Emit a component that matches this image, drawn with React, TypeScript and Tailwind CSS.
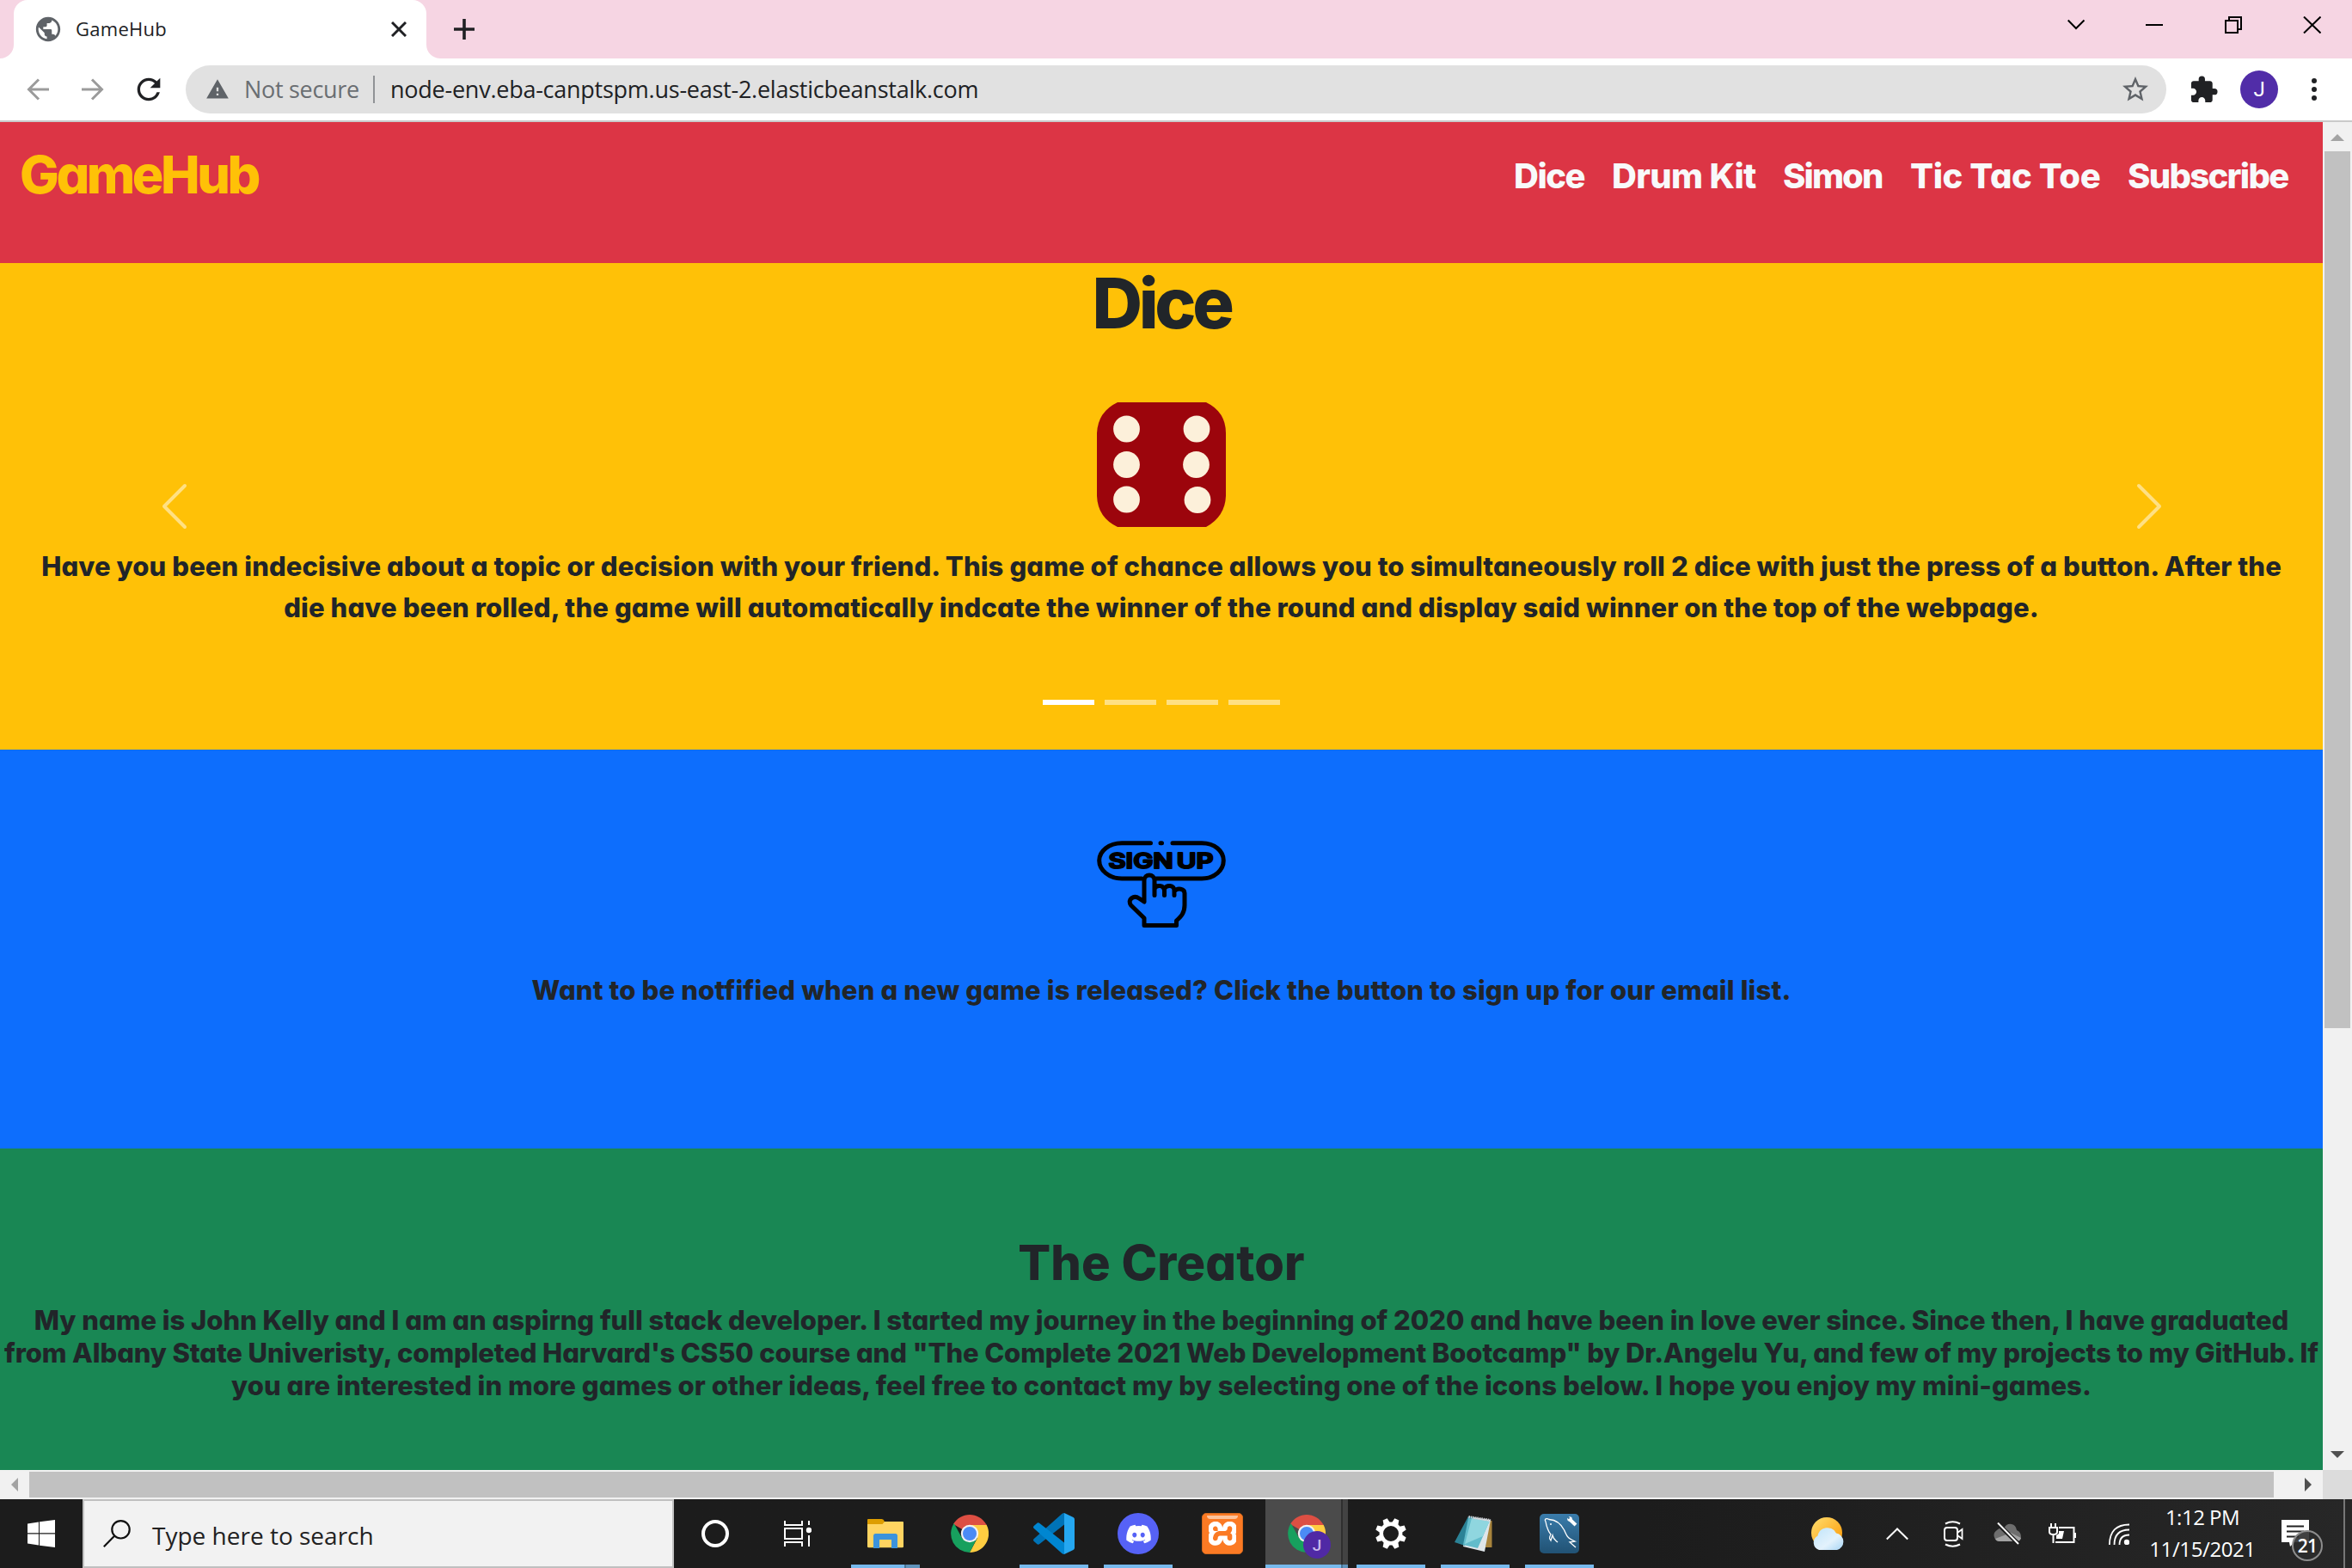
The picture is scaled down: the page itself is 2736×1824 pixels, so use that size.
import React from "react";
import { MdPublic, MdRefresh, MdWarning, MdStarBorder, MdExtension } from "react-icons/md";
import { SiXampp } from "react-icons/si";
import { FaDiscord } from "react-icons/fa";

function TabStrip() {
  return (
    <div className="flex h-[68px] shrink-0 bg-[#f6d5e3] text-[#202124]">
      <div className="relative ml-4 flex h-[68px] w-[480px] items-center rounded-t-[16px] bg-white pl-[23px]">
        <svg className="absolute bottom-0 -left-4 size-4" viewBox="0 0 16 16">
          <path d="M16 0V16H0A16 16 0 0 0 16 0Z" fill="#fff" />
        </svg>
        <svg className="absolute -right-4 bottom-0 size-4" viewBox="0 0 16 16">
          <path d="M0 0V16H16A16 16 0 0 1 0 0Z" fill="#fff" />
        </svg>
        <MdPublic className="size-[34px] text-[#5f6368]" />
        <span className="-mt-[2px] ml-[15px] text-[22px] leading-none tracking-[0.27px] whitespace-nowrap">GameHub</span>
        <svg className="mr-[23px] ml-auto size-[18px]" viewBox="0 0 18 18" stroke="#202124" strokeWidth="3">
          <path d="M1 1L17 17M17 1L1 17" />
        </svg>
      </div>
      <svg className="mt-[22px] ml-8 size-6" viewBox="0 0 24 24" stroke="#202124" strokeWidth="3.6">
        <path d="M12 0V24M0 12H24" />
      </svg>
      <svg className="mt-[19px] mr-9 ml-auto h-5 w-[295px]" viewBox="0 0 295 20" fill="none" stroke="#000" strokeWidth="2">
        <path d="M.7 4.5L10 14L19.5 4.5" />
        <path d="M91 10H111" />
        <path d="M184 5H198V19H184ZM188 5V1H202V15H198" />
        <path d="M275 .5L294.500 19.500M294.500 .5L275 19.500" />
      </svg>
    </div>
  );
}

function Toolbar() {
  return (
    <div className="flex h-[74px] shrink-0 items-center border-b-2 border-[#cacaca] bg-white pb-0 text-[#202124]">
      <svg className="ml-[31px] size-[26px]" viewBox="0 0 26 26" fill="none" stroke="#9b9b9b" strokeWidth="3">
        <path d="M26 13H2.500M14 1.500L2.500 13L14 24.500" />
      </svg>
      <svg className="ml-[38px] size-[26px]" viewBox="0 0 26 26" fill="none" stroke="#9b9b9b" strokeWidth="3">
        <path d="M0 13H23.500M12 1.500L23.500 13L12 24.500" />
      </svg>
      <MdRefresh className="ml-[32px] size-10" />
      <div className="ml-[23px] flex h-14 w-[2304px] items-center rounded-full bg-[#e1e1e1] pr-[18px] pl-[23px]">
        <MdWarning className="size-[28px] text-[#5f6368]" />
        <span className="-mt-[2px] ml-[17px] w-[134px] text-[27px] leading-none tracking-[-0.3px] whitespace-nowrap text-[#6a6e72]">Not secure</span>
        <span className="ml-[16px] h-8 w-[2px] bg-[#909396]" />
        <span className="-mt-[2px] ml-[18px] text-[27px] leading-none tracking-[-0.25px] whitespace-nowrap">
          node-env.eba-canptspm.us-east-2.elasticbeanstalk.com
        </span>
        <MdStarBorder className="ml-auto size-[36px] text-[#5f6368]" />
      </div>
      <MdExtension className="ml-[26px] size-[35px]" />
      <div className="ml-[25px] flex size-11 items-center justify-center rounded-full bg-[#512da8] font-['Roboto'] text-[24px] leading-none text-white">J</div>
      <svg className="ml-[39px] h-[26px] w-[6px]" viewBox="0 0 6 26" fill="#202124">
        <circle cx="3" cy="3" r="3" />
        <circle cx="3" cy="13" r="3" />
        <circle cx="3" cy="23" r="3" />
      </svg>
    </div>
  );
}

function SiteHeader() {
  return (
    <header className="flex h-[164px] items-start bg-[#dc3545] pl-[23px] text-[#f8f9fa]">
      <a className="h-[123px] text-[61px] leading-[123px] tracking-[-3.500px] whitespace-nowrap text-[#ffc107]">GameHub</a>
      <nav className="mr-[38px] ml-auto flex h-[125px] text-[40px] leading-[125px] whitespace-nowrap">
        <a className="w-[114px] pl-px tracking-[-1.500px]">Dice</a>
        <a className="w-[199px] pl-px tracking-[-0.700px]">Drum Kit</a>
        <a className="w-[149px] pl-px tracking-[-1.900px]">Simon</a>
        <a className="w-[252px] tracking-[-0.4px]">Tic Tac Toe</a>
        <a className="w-[190px] pl-px tracking-[-1.700px]">Subscribe</a>
      </nav>
    </header>
  );
}

function Die() {
  const pips = [
    [34.5, 31], [116, 31], [34.5, 72.5], [115.500, 72.5], [34.500, 113], [117, 113.500],
  ];
  return (
    <svg className="mt-[67px] h-[145px] w-[150px]" viewBox="0 0 150 145">
      <path d="M24 0H127Q150 11 150 36V109Q149 133 127 145H24Q1 134 0 109V36Q1 11 24 0Z" fill="#9c050c" />
      {pips.map(([x, y]) => (
        <circle key={x + "-" + y} cx={x} cy={y} r="15.400" fill="#fcf0da" />
      ))}
    </svg>
  );
}

function Carousel() {
  return (
    <section className="relative flex h-[566px] flex-col items-center bg-[#ffc107]">
      <h1 className="h-[95px] text-[81px] leading-[95px] tracking-[-4.300px] whitespace-nowrap">Dice</h1>
      <Die />
      <p className="mt-[22px] text-center text-[31px] leading-[48px] whitespace-nowrap">
        <span className="block tracking-[0.104px]">
          Have you been indecisive about a topic or decision with your friend. This game of chance allows you to simultaneously roll 2 dice with just the press of a button. After the
        </span>
        <span className="block tracking-[0.122px]">
          die have been rolled, the game will automatically indcate the winner of the round and display said winner on the top of the webpage.
        </span>
      </p>
      <div className="mt-[83px] flex gap-3">
        <span className="h-[6px] w-[60px] bg-white" />
        <span className="h-[6px] w-[60px] bg-white/50" />
        <span className="h-[6px] w-[60px] bg-white/50" />
        <span className="h-[6px] w-[60px] bg-white/50" />
      </div>
      <svg className="absolute top-[256px] left-[188px] h-[54px] w-[30px]" viewBox="0 0 30 54" fill="none" stroke="#ffe083" strokeWidth="4" strokeLinecap="round" strokeLinejoin="round">
        <path d="M27 3L3 27L27 51" />
      </svg>
      <svg className="absolute top-[256px] right-[187px] h-[54px] w-[30px]" viewBox="0 0 30 54" fill="none" stroke="#ffe083" strokeWidth="4" strokeLinecap="round" strokeLinejoin="round">
        <path d="M3 3L27 27L3 51" />
      </svg>
    </section>
  );
}

function SignUp() {
  return (
    <section className="flex h-[464px] flex-col items-center bg-[#0d6efd]">
      <svg className="mt-[106px] h-[102px] w-[150px]" viewBox="0 0 150 102" fill="none" stroke="#000" strokeWidth="5" strokeLinecap="round" strokeLinejoin="round">
        <path d="M62.500 2.700H29C14 2.700 2.700 12 2.700 23S14 44 29 44H52M69 44H122C137 44 147.300 34 147.300 23S137 2.700 122 2.700H88" />
        <path d="M74 2.700H75.500" />
        <path d="M55 71V46C55 38 67 38 67 46V63.500M67 56C69 51 78 51 78.500 58V63.500M78.500 56C81 51 90 51 90 58V63.500M90 59C94 54 102 56 102 61V75C102 84 98 88 92.500 93V98.500H55V90L39.500 75C35 68 43 63 49 67L55 71" />
        <text x="13.500" y="31.800" fontSize="24" fontWeight="600" fill="#000" strokeWidth="2" wordSpacing="-3" textLength="122" lengthAdjust="spacingAndGlyphs">SIGN UP</text>
      </svg>
      <p className="mt-[48px] text-[31px] leading-[48px] tracking-[0.150px] whitespace-nowrap">
        Want to be notfified when a new game is released? Click the button to sign up for our email list.
      </p>
    </section>
  );
}

function Creator() {
  return (
    <section className="flex flex-1 flex-col items-center bg-[#198754] pt-[100px]">
      <h2 className="h-[67px] text-[56px] leading-[67px] tracking-[0.2px] whitespace-nowrap">The Creator</h2>
      <p className="mt-[14px] text-center text-[31px] leading-[38.200px] whitespace-nowrap">
        <span className="block tracking-[-0.020px]">
          My name is John Kelly and I am an aspirng full stack developer. I started my journey in the beginning of 2020 and have been in love ever since. Since then, I have graduated
        </span>
        <span className="block tracking-[-0.115px]">
          from Albany State Univeristy, completed Harvard's CS50 course and "The Complete 2021 Web Development Bootcamp" by Dr.Angelu Yu, and few of my projects to my GitHub. If
        </span>
        <span className="block tracking-[0.055px]">
          you are interested in more games or other ideas, feel free to contact my by selecting one of the icons below. I hope you enjoy my mini-games.
        </span>
      </p>
    </section>
  );
}

function VerticalScrollbar() {
  return (
    <div className="flex w-[34px] flex-col items-center bg-[#f1f1f1]">
      <svg className="mt-[14px] h-2 w-4" viewBox="0 0 16 8"><path d="M8 0L16 8H0Z" fill="#a3a3a3" /></svg>
      <div className="mt-3 h-[1020px] w-[30px] bg-[#c1c1c1]" />
      <svg className="mt-auto mb-[14px] h-2 w-4" viewBox="0 0 16 8"><path d="M0 0H16L8 8Z" fill="#505050" /></svg>
    </div>
  );
}

function HorizontalScrollbar() {
  return (
    <div className="flex h-[34px] shrink-0 items-center bg-[#f1f1f1]">
      <svg className="ml-[13px] h-4 w-2" viewBox="0 0 8 16"><path d="M8 0V16L0 8Z" fill="#a3a3a3" /></svg>
      <div className="ml-[13px] h-[30px] w-[2611px] bg-[#c1c1c1]" />
      <svg className="ml-9 h-4 w-2" viewBox="0 0 8 16"><path d="M0 0V16L8 8Z" fill="#505050" /></svg>
      <div className="ml-auto h-[34px] w-[34px] bg-[#dcdcdc]" />
    </div>
  );
}

function ChromeIcon({ className }: { className: string }) {
  return (
    <svg className={className} viewBox="0 0 44 44">
      <path d="M22 22L2.950 11A22 22 0 0 1 41.050 11L42 12H22Z" fill="#dd4f43" />
      <path d="M22 12H41.700A22 22 0 0 1 22 44L31 27Z" fill="#ffcd41" />
      <path d="M3.700 10A22 22 0 0 0 22 44L30.700 27L22 32L13 27Z" fill="#17a05e" />
      <circle cx="22" cy="22" r="10.200" fill="#f1f1f1" />
      <circle cx="22" cy="22" r="8" fill="#4b8bf5" />
    </svg>
  );
}

function TaskbarApp({ children, state = "none" }: { children: React.ReactNode; state?: "none" | "open" | "stacked" | "active" }) {
  if (state === "active") {
    return (
      <div className="relative flex h-20 w-[98px] items-center justify-center px-px">
        <div className="absolute inset-y-0 left-px flex w-24">
          <span className="w-[88px] border-b-4 border-[#76b9ed] bg-[#4b4b4b]" />
          <span className="w-[2px] border-b-4 border-[#4a7494] bg-[#2f2f2f]" />
          <span className="w-[6px] border-b-4 border-[#6093bb] bg-[#434343]" />
        </div>
        <div className="relative">{children}</div>
      </div>
    );
  }
  return (
    <div className="relative flex h-20 w-[98px] items-center justify-center">
      {children}
      {state !== "none" && (
        <div className="absolute bottom-0 left-[9px] flex h-1 w-20 bg-[#76b9ed]">
          {state === "stacked" && <span className="ml-auto h-1 w-[18px] border-l-2 border-[#4a7494] bg-[#6093bb]" />}
        </div>
      )}
    </div>
  );
}

function Gear() {
  return (
    <svg className="size-9" viewBox="-18 -18 36 36" fill="none" stroke="#fff">
      <circle r="11.200" strokeWidth="4.400" />
      {[22.5, 67.5, 112.5, 157.5, 202.5, 247.5, 292.5, 337.5].map((a) => (
        <path key={a} d="M-4 -11.500L-2.700 -18H2.700L4 -11.500Z" fill="#fff" stroke="none" transform={`rotate(${a})`} />
      ))}
    </svg>
  );
}

function Taskbar() {
  return (
    <footer className="flex h-20 shrink-0 items-center bg-linear-to-r from-[#1c1c1c] from-70% to-[#272727] text-white">
      <div className="flex w-24 items-center justify-center">
        <svg className="size-8" viewBox="0 0 32 32" fill="#fff">
          <path d="M0 4.500L13 2.500V15.300H0ZM14 2.300L32 0V15.300H14ZM0 16.500H13V29.500L0 27.500ZM14 16.500H32V32L14 29.700Z" />
        </svg>
      </div>
      <div className="flex h-20 w-[688px] items-center border-2 border-[#c0c0c0] bg-[#f2f2f2] pl-[22px] text-[#222]">
        <svg className="size-8" viewBox="0 0 32 32" fill="none" stroke="#111" strokeWidth="2.200">
          <circle cx="20.500" cy="11.300" r="10.200" />
          <path d="M13.300 18.600L.8 31.200" />
        </svg>
        <span className="mt-[3px] ml-[25px] text-[28px] leading-none whitespace-nowrap">Type here to search</span>
      </div>
      <div className="flex w-24 justify-center">
        <span className="size-8 rounded-full border-[4.500px] border-white" />
      </div>
      <div className="flex w-[101px] justify-center">
        <svg className="mr-[5px] h-[30px] w-8" viewBox="0 0 32 30" fill="none" stroke="#fff" strokeWidth="2">
          <path d="M1 0V5H21V0M1 9H21V21H1ZM1 30V25H21V30M29 0V5M29 17V30" />
          <circle cx="29" cy="11" r="3.200" fill="#fff" stroke="none" />
        </svg>
      </div>
      <TaskbarApp state="stacked">
        <svg className="h-[34px] w-[42px]" viewBox="0 0 42 34">
          <path d="M0 1Q0 0 1 0H16.500Q18.500 0 19.500 2L20.500 6H0Z" fill="#dd9d00" />
          <path d="M0 6H17.500L20 3H41Q42 3 42 4V32Q42 33.300 40.500 33.300H1.500Q0 33.300 0 32Z" fill="#ffd461" />
          <path d="M7 34V19.500Q7 17 9.500 17H32.500Q35 17 35 19.500V34H28V24H14V34Z" fill="#3c93dc" />
        </svg>
      </TaskbarApp>
      <TaskbarApp><ChromeIcon className="size-11" /></TaskbarApp>
      <TaskbarApp state="open">
        <svg className="size-12" viewBox="0 0 48 48">
          <path d="M36 0V13.500L7 36.300Q5.500 37.300 4.200 36L.8 33Q-.8 31.500 .8 30L33 1.200Q34.500 0 36 0Z" fill="#0073b7" />
          <path d="M36 48V34.500L7 11.700Q5.500 10.700 4.200 12L.8 15Q-.8 16.500 .8 18L33 46.800Q34.500 48 36 48Z" fill="#0086d1" />
          <path d="M36 0L46.500 5Q48 5.800 48 7.500V40.500Q48 42.200 46.500 43L36 48Z" fill="#25a7f0" />
        </svg>
      </TaskbarApp>
      <TaskbarApp state="open">
        <div className="flex size-12 items-center justify-center rounded-full bg-[#5662f6]">
          <FaDiscord className="size-[31px]" />
        </div>
      </TaskbarApp>
      <TaskbarApp>
        <div className="relative flex size-12 items-center justify-center overflow-hidden rounded-[5px] border border-[#d2691e] bg-[#fb7a24]">
          <span className="absolute top-[9px] left-[7px] h-7 w-8 bg-white" />
          <SiXampp className="relative size-[46px] shrink-0 text-[#fb7a24]" />
          <span className="absolute top-[2px] left-[5px] h-[4px] w-9 rounded-b-full bg-white/55" />
        </div>
      </TaskbarApp>
      <TaskbarApp state="active">
        <ChromeIcon className="size-11" />
        <span className="absolute top-[19px] left-[18px] flex size-8 items-center justify-center rounded-full bg-[#5029a5] font-['Roboto'] text-[19px] leading-none font-medium text-[#c9b8ea]">J</span>
      </TaskbarApp>
      <TaskbarApp state="open"><Gear /></TaskbarApp>
      <TaskbarApp state="open">
        <svg className="mr-[4px] h-[43px] w-11" viewBox="0 0 44 43">
          <path d="M38 5L43.500 6V37H36Z" fill="#a8843c" />
          <path d="M16 1L42 5L35 42L10 36Z" fill="#dfe6ea" />
          <path d="M16 1L0 31L12 35L22 2Z" fill="#2b8296" />
          <path d="M16 3L40.500 7L27 38L10 34Z" fill="#62bccb" />
          <path d="M20 3L40.500 7L33 24L12 33Z" fill="#8fd6df" />
          <path d="M16.500 1.500L42 5.500" stroke="#c9ccd0" strokeWidth="3" strokeDasharray="1.500 1" />
        </svg>
      </TaskbarApp>
      <TaskbarApp state="open">
        <svg className="size-[46px]" viewBox="0 0 46 46" fill="none" stroke="#fff" strokeWidth="1.300">
          <defs>
            <linearGradient id="sea" x1="0" y1="0" x2="0" y2="1">
              <stop offset="0" stopColor="#3a7cab" />
              <stop offset="1" stopColor="#215274" />
            </linearGradient>
          </defs>
          <rect width="46" height="46" rx="5" fill="url(#sea)" stroke="none" />
          <path d="M42 39L35 33L38 32.500L41 32C34 29 32 27 30 22C26 12 19 7 11 6.500C8 4.500 5 6 7 9C8 15 9 19 13 24C10 29 12 29 13 31L15 25C16 30 19 31 21 33" />
          <circle cx="13" cy="12" r="1" fill="#fff" stroke="none" />
          <path d="M34.500 6L42 13" strokeWidth="4" />
          <circle cx="35" cy="6" r="2.800" fill="#fff" stroke="none" />
          <path d="M32 3L34.500 5.500" stroke="#39779f" strokeWidth="2" />
        </svg>
      </TaskbarApp>

      <svg className="ml-auto h-[38px] w-10" viewBox="0 0 40 38">
        <defs>
          <linearGradient id="sun" x1="0" y1="0" x2="1" y2="1">
            <stop offset="0" stopColor="#ffdf70" />
            <stop offset="1" stopColor="#fb9500" />
          </linearGradient>
          <linearGradient id="cloud" x1="0" y1="0" x2="1" y2="1">
            <stop offset="0" stopColor="#bfe4fa" />
            <stop offset=".6" stopColor="#e3f2fc" />
            <stop offset="1" stopColor="#a6d5f5" />
          </linearGradient>
        </defs>
        <circle cx="18" cy="18" r="18" fill="url(#sun)" />
        <path d="M9 38A9 9 0 0 1 7.500 21.500A11.500 11.500 0 0 1 29 18.500A10 10 0 0 1 30 38Z" fill="url(#cloud)" />
      </svg>
      <svg className="ml-[47px] h-[15px] w-[26px]" viewBox="0 0 26 15" fill="none" stroke="#fff" strokeWidth="2">
        <path d="M.8 13.500L13 1.500L25.200 13.500" />
      </svg>
      <svg className="ml-[41px] h-[31px] w-[23px]" viewBox="0 0 23 31" fill="none" stroke="#fff" strokeWidth="2">
        <path d="M2 3.500Q10.500 -1 19 3.500M2 27.500Q10.500 32 19 27.500" />
        <rect x="1" y="8" width="15" height="15" rx="3" />
        <path d="M16 14L21.500 10V21L16 17" strokeWidth="1.800" />
      </svg>
      <svg className="ml-[35px] h-[26px] w-8" viewBox="0 0 32 26">
        <path d="M7 22A7 7 0 0 1 4 9Q8 5 12 7Q15 1 21 2Q26 3 27 9Q32 11 32 17Q31 22 27 22Z" fill="#6e6e6e" />
        <path d="M2 19L20 12L32 18Q31 22 27 22H7Q3 22 2 19Z" fill="#a3a3a3" />
        <path d="M4.500 1L30 26" stroke="#1f1f1f" strokeWidth="5" />
        <path d="M5 .5L29 25" stroke="#fff" strokeWidth="2" />
      </svg>
      <svg className="ml-8 h-6 w-8" viewBox="0 0 32 24" fill="none" stroke="#fff" strokeWidth="2">
        <path d="M3 0V4M8 0V4M1 5H10V10Q10 13 5.500 13Q1 13 1 10ZM5.500 13V23" />
        <path d="M12 5H29.500V22H8M31 11V17" />
        <path d="M12 9H18L16 18H9V14L12 12Z" fill="#fff" stroke="none" />
      </svg>
      <svg className="ml-[38px] h-[25px] w-6" viewBox="0 0 24 25" fill="none" stroke="#fff" strokeWidth="1.800">
        <path d="M.9 25Q.9 1.500 24 1.500M6.500 25Q6.500 7.500 24 7.500M12.500 25Q12.500 13.500 24 13.500" />
        <circle cx="21" cy="22" r="3.200" fill="#fff" stroke="none" />
      </svg>
      <div className="-mt-[3px] ml-[10px] flex w-[150px] flex-col items-center text-[24px] leading-[37px] whitespace-nowrap">
        <span className="tracking-[-0.5px]">1:12 PM</span>
        <span className="tracking-[-0.4px]">11/15/2021</span>
      </div>
      <div className="relative ml-[17px] h-20 w-12">
        <svg className="absolute top-6 left-0 h-8 w-8" viewBox="0 0 32 32">
          <path d="M0 0H32V26H15L10 31L9 26H0Z" fill="#fff" />
          <path d="M6 7.500H26M6 13.500H26M6 19.500H20" stroke="#222" strokeWidth="2" />
        </svg>
        <span className="absolute top-[36px] left-[12px] flex size-9 items-center justify-center rounded-full border-2 border-[#8d8d8d] bg-[#2c2c2c]/90 text-[21px] leading-none font-semibold tracking-[-0.8px]">
          21
        </span>
      </div>
      <span className="mr-[8px] ml-6 h-20 w-[2px] bg-[#777]" />
    </footer>
  );
}

export default function App() {
  return (
    <div className="flex h-[1824px] w-[2736px] flex-col overflow-hidden bg-white font-['Open_Sans','Noto_Sans',sans-serif]">
      <TabStrip />
      <Toolbar />
      <div className="flex min-h-0 flex-1">
        <main className="flex w-[2702px] flex-col font-['Inter',sans-serif] font-extrabold text-[#212529] [font-feature-settings:'cv11']">
          <SiteHeader />
          <Carousel />
          <SignUp />
          <Creator />
        </main>
        <VerticalScrollbar />
      </div>
      <HorizontalScrollbar />
      <Taskbar />
    </div>
  );
}
